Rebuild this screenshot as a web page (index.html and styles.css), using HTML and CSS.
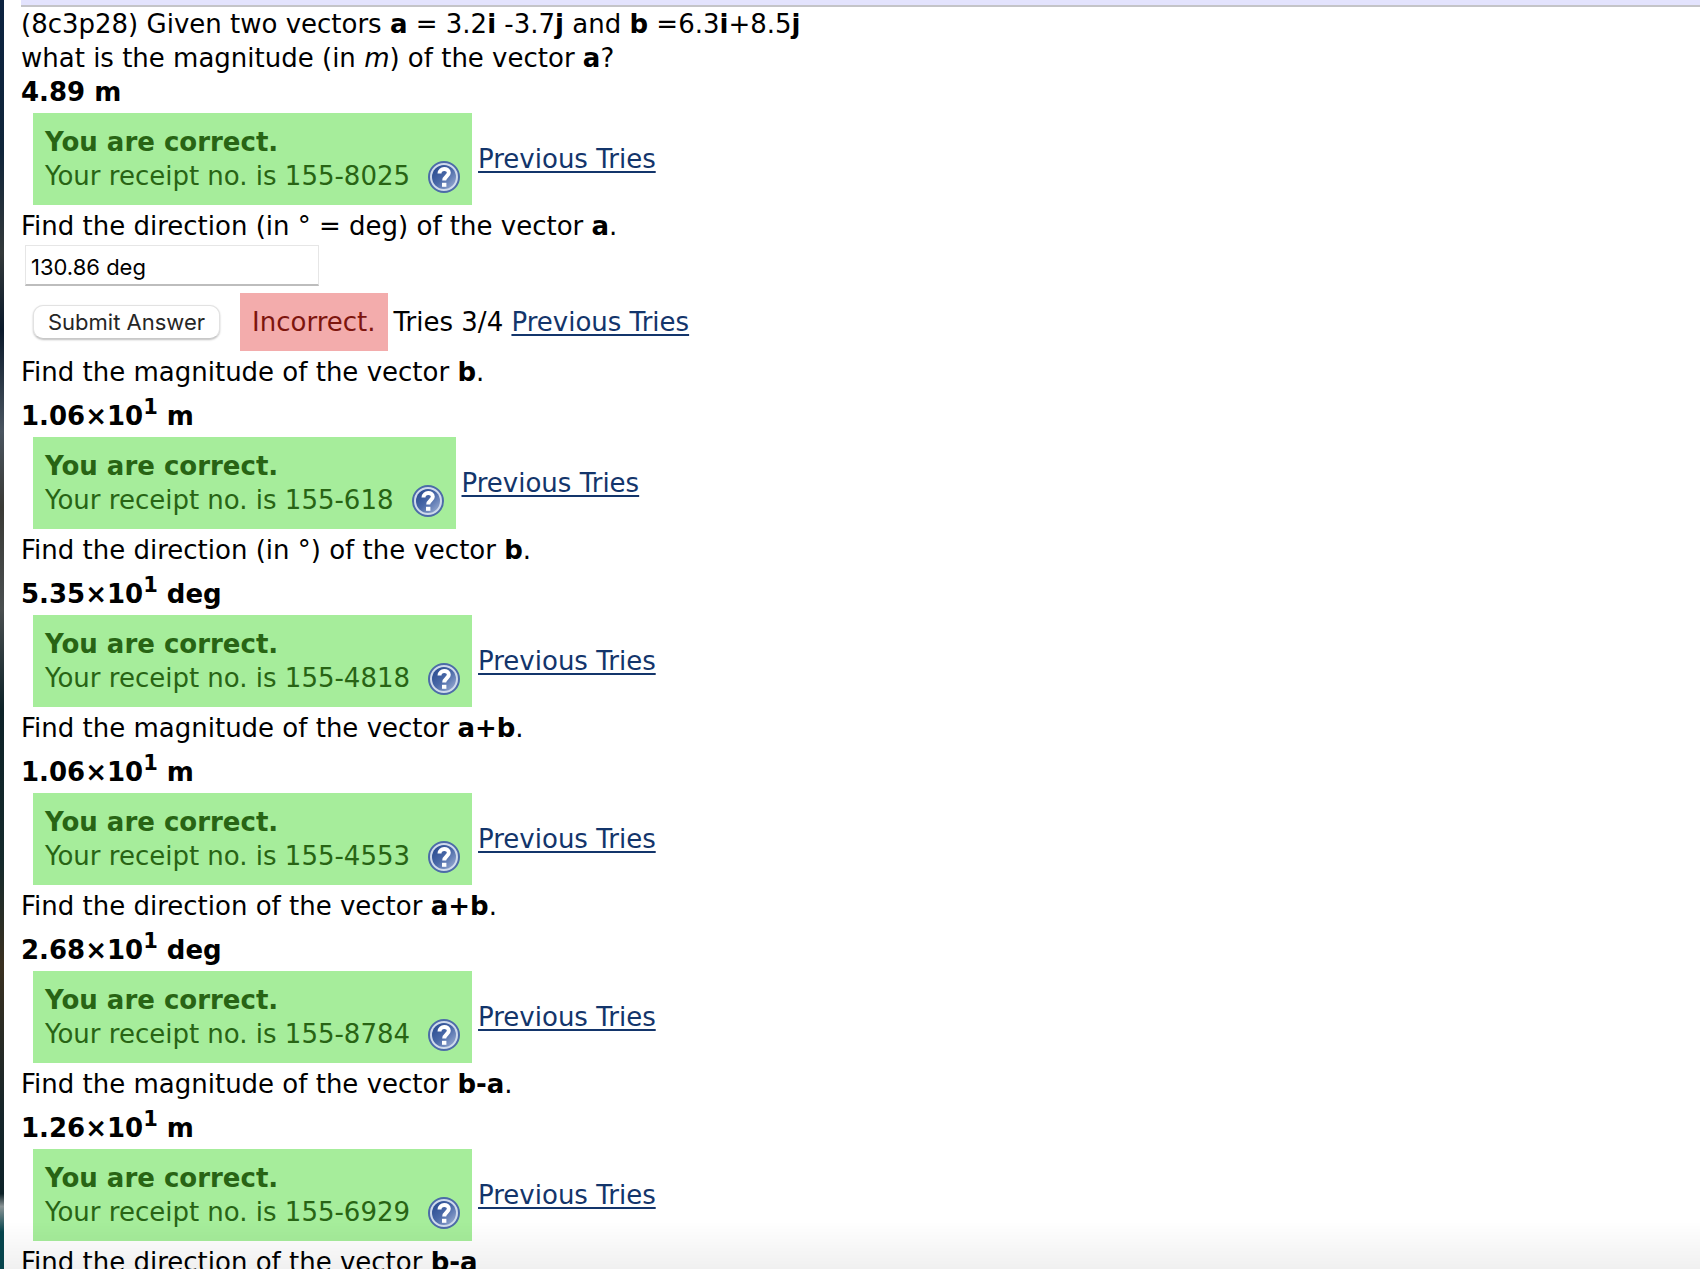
FILE: index.html
```html
<!DOCTYPE html>
<html lang="en">
<head>
    <meta charset="UTF-8">
    <meta name="viewport" content="width=device-width, initial-scale=1.0">
    <title>Vectors</title>
    <link rel="stylesheet" href="styles.css">
</head>
<body>
    <!-- Shared help icon -->
    <svg class="icon-defs" width="0" height="0" aria-hidden="true">
        <defs>
            <linearGradient id="helpFill" x1="0" y1="0" x2="1" y2="1">
                <stop offset="0" stop-color="#23468c"/>
                <stop offset="0.5" stop-color="#4a69a8"/>
                <stop offset="1" stop-color="#a3b4d8"/>
            </linearGradient>
            <symbol id="help" viewBox="0 0 32 32">
                <circle cx="16" cy="16" r="15" fill="#cfdaec" stroke="#4c6ba8" stroke-width="2"/>
                <circle cx="16" cy="16" r="12" fill="url(#helpFill)"/>
                <path d="M11.5 12.5C11.5 6.5 20.8 6.8 20.8 11.8C20.8 15.2 16.2 15.4 16.2 19.6" fill="none" stroke="#fff" stroke-width="4"/>
                <rect x="14" y="21.8" width="4.4" height="4" fill="#fff"/>
            </symbol>
        </defs>
    </svg>

    <div class="page">
        <div class="topbar"></div>
        <main>
            <form class="problem" onsubmit="return false">
                <p>(8c3p28) Given two vectors <b>a</b> = 3.2<b>i</b> -3.7<b>j</b> and <b>b</b> =6.3<b>i</b>+8.5<b>j</b><br>
                what is the magnitude (in <i>m</i>) of the vector <b>a</b>?</p>
                <p class="answer">4.89 m</p>
                <div class="result">
                    <div class="correct">
                        <b>You are correct.</b>
                        <span class="receipt">Your receipt no. is 155-8025 <a href="#help" aria-label="Help"><svg><use href="#help"/></svg></a></span>
                    </div>
                    <a href="#tries">Previous Tries</a>
                </div>

                <p><label for="direction">Find the direction (in ° = deg) of the vector <b>a</b>.</label></p>
                <input type="text" id="direction" value="130.86 deg">
                <div class="result">
                    <button type="submit">Submit Answer</button>
                    <div class="incorrect">Incorrect.</div>
                    <span>Tries 3/4 <a href="#tries">Previous Tries</a></span>
                </div>

                <p>Find the magnitude of the vector <b>b</b>.</p>
                <p class="answer power">1.06×10<sup>1</sup> m</p>
                <div class="result">
                    <div class="correct">
                        <b>You are correct.</b>
                        <span class="receipt">Your receipt no. is 155-618 <a href="#help" aria-label="Help"><svg><use href="#help"/></svg></a></span>
                    </div>
                    <a href="#tries">Previous Tries</a>
                </div>

                <p>Find the direction (in °) of the vector <b>b</b>.</p>
                <p class="answer power">5.35×10<sup>1</sup> deg</p>
                <div class="result">
                    <div class="correct">
                        <b>You are correct.</b>
                        <span class="receipt">Your receipt no. is 155-4818 <a href="#help" aria-label="Help"><svg><use href="#help"/></svg></a></span>
                    </div>
                    <a href="#tries">Previous Tries</a>
                </div>

                <p>Find the magnitude of the vector <b>a+b</b>.</p>
                <p class="answer power">1.06×10<sup>1</sup> m</p>
                <div class="result">
                    <div class="correct">
                        <b>You are correct.</b>
                        <span class="receipt">Your receipt no. is 155-4553 <a href="#help" aria-label="Help"><svg><use href="#help"/></svg></a></span>
                    </div>
                    <a href="#tries">Previous Tries</a>
                </div>

                <p>Find the direction of the vector <b>a+b</b>.</p>
                <p class="answer power">2.68×10<sup>1</sup> deg</p>
                <div class="result">
                    <div class="correct">
                        <b>You are correct.</b>
                        <span class="receipt">Your receipt no. is 155-8784 <a href="#help" aria-label="Help"><svg><use href="#help"/></svg></a></span>
                    </div>
                    <a href="#tries">Previous Tries</a>
                </div>

                <p>Find the magnitude of the vector <b>b-a</b>.</p>
                <p class="answer power">1.26×10<sup>1</sup> m</p>
                <div class="result">
                    <div class="correct">
                        <b>You are correct.</b>
                        <span class="receipt">Your receipt no. is 155-6929 <a href="#help" aria-label="Help"><svg><use href="#help"/></svg></a></span>
                    </div>
                    <a href="#tries">Previous Tries</a>
                </div>

                <p>Find the direction of the vector <b>b-a</b></p>
            </form>
        </main>
    </div>
</body>
</html>
```
FILE: styles.css
```css
* {
    box-sizing: border-box;
}

body {
    margin: 0;
    background-color: #fff;
    color: #000;
    font-family: Verdana, "DejaVu Sans", sans-serif;
    font-size: 26px;
    line-height: 34px;
}

.icon-defs {
    position: absolute;
}

/* Page with the dark strip on the left edge */
.page {
    height: 100vh;
    overflow: hidden;
    padding-left: 17px;
    border-left: 4px solid;
    border-image: linear-gradient(#0c2340, #10253a 12%, #33393a 20%, #0b1a2b 26%, #4a5560 34%, #3a3a36 40%, #4a4f50 48%, #0d2228 56%, #152a2c 68%, #3a3020 76%, #15252a 88%, #0d2228 94%, #8a9496 95%, #06444c 97%, #06444c) 1;
}

/* Soft shadow at the bottom of the window */
.page::after {
    content: "";
    position: fixed;
    left: 4px;
    right: 0;
    bottom: 0;
    height: 48px;
    background: linear-gradient(rgba(0, 0, 0, 0), rgba(0, 0, 0, 0.06));
    pointer-events: none;
}

.topbar {
    height: 7px;
    background-color: #e3e3fd;
    border-bottom: 2px solid #c4c4c8;
}

p {
    margin: 0;
}

a {
    color: #13356b;
    text-decoration-thickness: 2px;
    text-underline-offset: 3px;
}

.answer {
    font-weight: bold;
}

.power {
    padding-top: 10px;
}

sup {
    font-size: 21px;
    line-height: 0;
    vertical-align: 11px;
}

/* Result rows */
.result {
    display: flex;
    align-items: center;
    gap: 6px;
    margin: 4px 0 4px 12px;
}

.correct {
    display: flex;
    flex-direction: column;
    padding: 12px;
    background-color: #a6ed9b;
    color: #286414;
}

.receipt {
    display: flex;
    align-items: flex-end;
    gap: 18px;
}

.receipt a,
.receipt svg {
    display: block;
    width: 32px;
    height: 32px;
}

.incorrect {
    padding: 12px;
    background-color: #f3acac;
    color: #7d150e;
}

/* Form controls */
input {
    display: block;
    width: 294px;
    height: 41px;
    margin: 2px 0 7px 4px;
    padding: 4px 5px 0;
    border: 1px solid #e6e6e6;
    border-bottom: 2px solid #bdbdbd;
    background-color: #fff;
    color: #000;
    font-family: Inter, sans-serif;
    font-size: 22px;
}

button {
    height: 34px;
    margin-right: 14px;
    padding: 0 14px;
    border: 1px solid #e2e2e2;
    border-bottom-color: #c8c8c8;
    border-radius: 10px;
    background-color: #fff;
    box-shadow: 0 1px 2px rgba(0, 0, 0, 0.25);
    color: #262626;
    font-family: Inter, sans-serif;
    font-size: 22px;
}
```
